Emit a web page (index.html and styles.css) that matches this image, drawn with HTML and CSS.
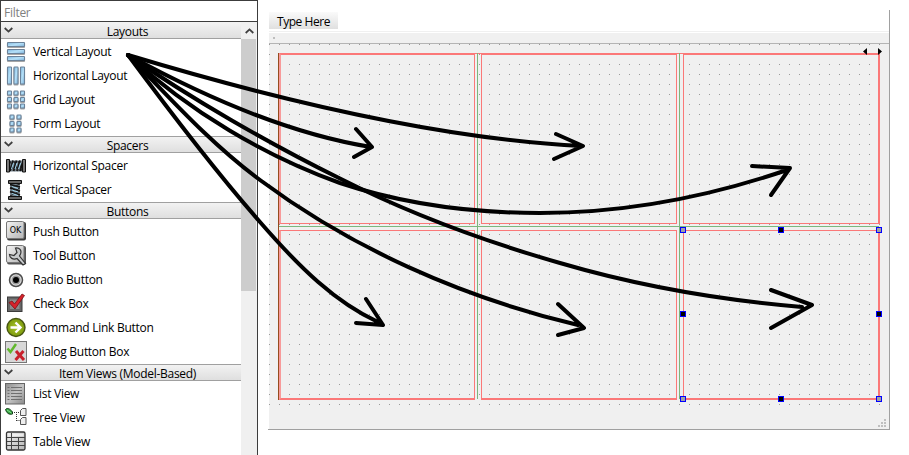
FILE: index.html
```html
<!DOCTYPE html>
<html lang="en">
<head>
<meta charset="utf-8">
<title>Widget Box</title>
<link rel="stylesheet" href="styles.css">
</head>
<body>
<svg width="0" height="0" class="defs">
  <defs>
    <linearGradient id="blue" x1="0" y1="0" x2="1" y2="1"><stop offset="0" stop-color="#7fb6de"/><stop offset=".5" stop-color="#b5e0f8"/><stop offset="1" stop-color="#7fb2da"/></linearGradient>
    <linearGradient id="grey" x1="0" y1="0" x2="1" y2="1"><stop offset="0" stop-color="#f4f4f4"/><stop offset="1" stop-color="#b4b4b4"/></linearGradient>
    <linearGradient id="mid" x1="0" y1="0" x2="1" y2="1"><stop offset="0" stop-color="#8c8c8c"/><stop offset=".5" stop-color="#c4c4c4"/><stop offset="1" stop-color="#8a8a8a"/></linearGradient>
    <radialGradient id="green"><stop offset="0" stop-color="#a9c42c"/><stop offset="1" stop-color="#7c9a0c"/></radialGradient>
  </defs>
</svg>
<div class="app">
  <aside class="box">
    <div class="filter">Filter</div>
    <div class="body">
      <div class="list">
        <section>
          <h2 class="first"><svg class="chev" viewBox="0 0 9 6"><path d="M.7 1 4.5 4.6 8.3 1"/></svg><span>Layouts</span></h2>
          <ul>
            <li><svg class="ico lay" viewBox="0 0 22 22"><g><rect x="2.500" y="1.500" width="17" height="4" rx=".6"/><rect x="2.500" y="8.500" width="17" height="4" rx=".6"/><rect x="2.500" y="15.500" width="17" height="4" rx=".6"/></g></svg><span>Vertical Layout</span></li>
            <li><svg class="ico lay" viewBox="0 0 22 22"><g><rect x="2.500" y="2" width="4" height="17" rx=".6"/><rect x="9" y="2" width="4" height="17" rx=".6"/><rect x="15.500" y="2" width="4" height="17" rx=".6"/></g></svg><span>Horizontal Layout</span></li>
            <li><svg class="ico lay" viewBox="0 0 22 22"><g><rect x="2.500" y="2" width="4" height="4" rx=".6"/><rect x="9" y="2" width="4" height="4" rx=".6"/><rect x="15.500" y="2" width="4" height="4" rx=".6"/><rect x="2.500" y="8.500" width="4" height="4" rx=".6"/><rect x="9" y="8.500" width="4" height="4" rx=".6"/><rect x="15.500" y="8.500" width="4" height="4" rx=".6"/><rect x="2.500" y="15" width="4" height="4" rx=".6"/><rect x="9" y="15" width="4" height="4" rx=".6"/><rect x="15.500" y="15" width="4" height="4" rx=".6"/></g></svg><span>Grid Layout</span></li>
            <li><svg class="ico lay" viewBox="0 0 22 22"><g><rect x="5" y="2" width="4" height="4" rx=".6"/><rect x="12" y="2" width="4" height="4" rx=".6"/><rect x="5" y="8.500" width="4" height="4" rx=".6"/><rect x="12" y="8.500" width="4" height="4" rx=".6"/><rect x="5" y="15" width="4" height="4" rx=".6"/><rect x="12" y="15" width="4" height="4" rx=".6"/></g></svg><span>Form Layout</span></li>
          </ul>
        </section>
        <section>
          <h2><svg class="chev" viewBox="0 0 9 6"><path d="M.7 1 4.5 4.6 8.3 1"/></svg><span>Spacers</span></h2>
          <ul>
            <li><svg class="ico" viewBox="0 0 22 22"><path d="M4 5.500h14v11H4z" fill="#75828c"/><path d="M5 16 8 5.500M8.500 16l3-10.500M12 16l3-10.500M15 16l2.500-8" stroke="#111" stroke-width="1.800" fill="none"/><path d="M5 6l4 10M9 6l4 10M13 6l4 10" stroke="#222" stroke-width="1"/><path d="M6.500 14 8.500 8M10 14l2-6M13.500 14l2-6" stroke="#9fd4ee" stroke-width="1"/><path d="M1.500 4.500h3v12.500h-3zM17.500 4.500h3v12.500h-3z" fill="#777" stroke="#111"/></svg><span>Horizontal Spacer</span></li>
            <li><svg class="ico" viewBox="0 0 22 22"><path d="M5 4h10v14h-10z" fill="#75828c"/><path d="M5 5.500l10 2.500M5 9l10 3M5 12.500l10 3.500" stroke="#111" stroke-width="1.800"/><path d="M15 5 5 9M15 9 5 13M15 12 5 17" stroke="#222"/><path d="M7 7.500l6 2M7 11l6 2M7 14.500l6 2" stroke="#9fd4ee"/><path d="M3.500 1.500h13v3h-13zM3.500 17.500h13v3h-13z" fill="#666" stroke="#111"/></svg><span>Vertical Spacer</span></li>
          </ul>
        </section>
        <section>
          <h2><svg class="chev" viewBox="0 0 9 6"><path d="M.7 1 4.5 4.6 8.3 1"/></svg><span>Buttons</span></h2>
          <ul>
            <li><svg class="ico" viewBox="0 0 22 22"><rect x="2" y="1" width="19" height="18.500" rx="2" fill="#3c3c3c"/><rect x="1.500" y=".5" width="17.500" height="17" rx="1.500" fill="url(#grey)" stroke="#777"/><text x="4.800" y="12" class="ok">OK</text></svg><span>Push Button</span></li>
            <li><svg class="ico" viewBox="0 0 22 22"><rect x="2" y="1" width="19" height="18.500" rx="2" fill="#555"/><rect x="1.500" y=".5" width="17.500" height="17" rx="1.500" fill="url(#grey)" stroke="#777"/><path d="M10.500 3c4-.5 6.500 2 5 6L14.500 11l6 7.500-2.500 1.500-6-6.500c-4 1.500-7.500-.5-7.500-4l4.500 1 3-3z" fill="#c7cacc" stroke="#333" stroke-width="1.200"/></svg><span>Tool Button</span></li>
            <li><svg class="ico" viewBox="0 0 22 22"><circle cx="11" cy="11" r="6.500" fill="#ddd" stroke="#4c4c4c" stroke-width="1.500"/><circle cx="11" cy="11" r="4.500" fill="#999"/><circle cx="11" cy="11" r="3" fill="#000"/></svg><span>Radio Button</span></li>
            <li><svg class="ico" viewBox="0 0 22 22"><rect x="2.500" y="4" width="14.500" height="14.500" fill="#666" stroke="#3b3b3b"/><rect x="5" y="6.500" width="9.500" height="9.500" fill="#8c8c8c"/><path d="M4 9.500l3-1.500 2.500 3 7.500-10 2.500 1.500L10 16z" fill="#d6232b" stroke="#7b1015" stroke-width=".8"/></svg><span>Check Box</span></li>
            <li><svg class="ico" viewBox="0 0 22 22"><circle cx="11" cy="10.500" r="9" fill="url(#green)" stroke="#475512" stroke-width="1.400"/><path d="M5.500 10.500h9M10.500 5.500l5 5-5 5" fill="none" stroke="#fff" stroke-width="2.400"/></svg><span>Command Link Button</span></li>
            <li><svg class="ico" viewBox="0 0 22 22"><rect x=".5" y=".5" width="21" height="21" fill="#d8d8d8" stroke="#777"/><path d="M2.500 7.500l3 3.500 5.500-8" fill="none" stroke="#61b82d" stroke-width="2.500"/><path d="M11 10l8 9M18.500 10l-8 9" stroke="#c8202b" stroke-width="3"/></svg><span>Dialog Button Box</span></li>
          </ul>
        </section>
        <section>
          <h2><svg class="chev" viewBox="0 0 9 6"><path d="M.7 1 4.5 4.6 8.3 1"/></svg><span>Item Views (Model-Based)</span></h2>
          <ul>
            <li><svg class="ico" viewBox="0 0 22 22"><rect x=".5" y=".5" width="19" height="20.500" fill="url(#mid)" stroke="#666"/><path d="M2.500 4.500h2M2.500 7.500h2M2.500 10.500h2M2.500 13.500h2M2.500 16.500h2M6 4.500h11M6 7.500h11M6 10.500h11M6 13.500h11M6 16.500h11" stroke="#707070"/></svg><span>List View</span></li>
            <li><svg class="ico" viewBox="0 0 22 22"><path d="M.5 2.500C2 .5 5 1.500 7.500 5v2C4 8 1.500 6 .5 2.500z" fill="#33a33f" stroke="#163c1a"/><path d="M2 3l4.500 3" stroke="#8ade92"/><path d="M9 5.500h6M11.500 5v9M11.500 13.500h4" stroke="#333" stroke-dasharray="1 1"/><path d="M15.500 3.500l2-2h3.500v7h-5.500zM15.500 12.500l2-2h3.500v7h-5.500z" fill="#eee" stroke="#555"/></svg><span>Tree View</span></li>
            <li><svg class="ico" viewBox="0 0 22 22"><rect x="1.500" y="1" width="18.500" height="18" rx="1.500" fill="url(#grey)" stroke="#333" stroke-width="1.300"/><path d="M2 6.500h18M2 10.500h18M2 14.500h18M6.500 2v17M13.500 6v13" stroke="#444"/><path d="M7.500 4h11" stroke="#fff"/></svg><span>Table View</span></li>
          </ul>
        </section>
      </div>
      <div class="scroll">
        <div class="up"><svg class="chev" viewBox="0 0 9 6"><path d="M.7 5 4.500 1.400 8.300 5"/></svg></div>
        <div class="thumb"></div>
      </div>
    </div>
  </aside>

  <main class="form">
    <div class="menubar"><span class="type">Type Here</span></div>
    <div class="toolbar"></div>
    <div class="canvas">
      <div class="grid">
        <div class="cell top left"></div><div class="cell top"></div><div class="cell top right"></div>
        <div class="cell bottom left"></div><div class="cell bottom"></div><div class="cell bottom right"></div>
      </div>
    </div>
  </main>
</div>

<svg class="overlay" viewBox="0 0 909 455">
  <g shape-rendering="crispEdges">
    <g fill="#fb7878"><path d="M475 53h6v1h-6zM677 53h6v1h-6z"/></g>
    <g fill="#7cb67c"><path d="M477 53h1v346h-1zM679 53h1v346h-1zM279 226h600v1h-600z"/></g>
    <path d="M278 53h1v347h-1z" fill="#964b1e"/>
    <path d="M884 419h2v2h-2zM881 422h2v2h-2zM884 422h2v2h-2zM878 425h2v2h-2zM881 425h2v2h-2zM884 425h2v2h-2z" fill="#bfbfbf"/>
    <path d="M273 37h2v2h-2z" fill="#bdbdbd"/>
    <g fill="#a0a0a4" stroke="#00f"><path d="M680.500 227.500h5v5h-5zM876.500 227.500h5v5h-5zM680.500 396.500h5v5h-5zM876.500 396.500h5v5h-5z"/></g>
    <g fill="#000" stroke="#00f"><path d="M778.500 227.500h5v5h-5zM680.500 311.500h5v5h-5zM876.500 311.500h5v5h-5zM778.500 396.500h5v5h-5z"/></g>
  </g>
  <path d="M867 48v7l-4-3.500zM878 48v7l4-3.500z"/>
  <g class="arrows">
    <path d="M128 55Q400 137 582 146M556 134l27 12-29 13"/>
    <path d="M128 55Q265 130 371 147M356 129l16 18-18 10"/>
    <path d="M128 55C190 112 265 156 340 183C400 203 470 213 540 213C620 213 705 198 787 170M752 166l38 2-19 27"/>
    <path d="M128 55C190 98 270 144 340 178.500C410 214 480 240 560 263C635 285 720 300 802 307M771 290l41 15-41 23"/>
    <path d="M128 55C170 98 210 143 260 180C350 247 460 297 578 325M558 304l26 24-26 7"/>
    <path d="M128 55C165 105 210 165 260 222C300 268 335 302 378 322M366 299l17 26-27-2"/>
  </g>
</svg>
</body>
</html>
```
FILE: styles.css
```css
* { box-sizing: border-box; }
body { margin: 0; width: 909px; height: 455px; overflow: hidden; background: #fff; color: #000; font: 12px/16px "Open Sans", "Noto Sans", sans-serif; letter-spacing: -0.28px; }
.defs { position: absolute; }
.app { display: flex; height: 455px; }
.box { width: 258px; flex: none; border: 1px solid #3c3c3c; border-bottom: 0; display: flex; flex-direction: column; overflow: hidden; }
.filter { height: 21px; flex: none; padding: 4px 3px 0; line-height: 15px; border-bottom: 1px solid #3c3c3c; color: #808080; }
.body { flex: 1; display: flex; min-height: 0; }
.list { flex: 1; overflow: hidden; }
h2 { display: flex; align-items: center; justify-content: center; margin: 0; height: 17px; padding-left: 13px; position: relative; font-size: 12px; font-weight: 400; line-height: 15px; border-top: 1px solid #a0a0a0; border-bottom: 1px solid #a0a0a0; background: linear-gradient(#f2f2f2, #dfdfdf); }
h2.first { border-top-color: #f2f2f2; }
h2 span { padding-top: 1px; }
h2 .chev { position: absolute; left: 3px; top: 4px; }
.chev { width: 9px; height: 6px; fill: none; stroke: #404040; stroke-width: 1.8; }
ul { list-style: none; margin: 0; padding: 1px 0 0 4px; }
li { height: 24px; display: flex; align-items: center; gap: 6px; white-space: nowrap; }
.ico { width: 22px; height: 22px; overflow: visible; flex: none; }
.lay { fill: url(#blue); stroke: #6b8299; stroke-width: 1.1; filter: drop-shadow(0.5px 1px 0.5px rgba(0, 0, 0, .35)); }
.ok { font: 8px "DejaVu Sans", sans-serif; letter-spacing: -0.2px; }
.scroll { width: 16px; background: #f0f0f0; }
.up { height: 17px; display: flex; align-items: center; justify-content: center; }
.thumb { height: 252px; width: 15px; background: #cdcdcd; }
.form { width: 622px; height: 420px; margin: 10px 0 0 10px; border-right: 1px solid #a0a0a0; border-bottom: 1px solid #a0a0a0; padding-left: 1px; display: flex; flex-direction: column; }
.menubar { height: 22px; flex: none; padding-top: 2px; border-bottom: 1px solid #f0f0f0; }
.type { display: block; width: 69px; height: 17px; line-height: 19px; padding-left: 8px; letter-spacing: -0.45px; background: linear-gradient(#fafafa, #e0e0e0); }
.toolbar { height: 12px; flex: none; border-top: 1px solid #fff; border-bottom: 1px solid #b4b4b4; background: #f0f0f0; }
.canvas { flex: 1; padding: 9px 9px 0 10px; background: linear-gradient(#f0f0f0, #f0f0f0) 0 363px / 100% 30px no-repeat, conic-gradient(from 0deg at 1px 1px, transparent 75%, #9a9a9a 0) 0 0 / 10px 10px, #f0f0f0; }
.grid { height: 347px; width: 601px; display: grid; grid-template-columns: 196px 196px 197px; grid-template-rows: 171px 170px; gap: 6px; }
.cell { border: 1px solid #fb7878; }
.top { border-top-width: 2px; }
.bottom { border-bottom-width: 2px; }
.left { border-left: 2px solid #f89a9a; }
.right { border-right-width: 2px; }
.overlay { position: absolute; inset: 0; width: 909px; height: 455px; pointer-events: none; }
.arrows { fill: none; stroke: #000; stroke-width: 4; stroke-linecap: round; stroke-linejoin: round; }
```
